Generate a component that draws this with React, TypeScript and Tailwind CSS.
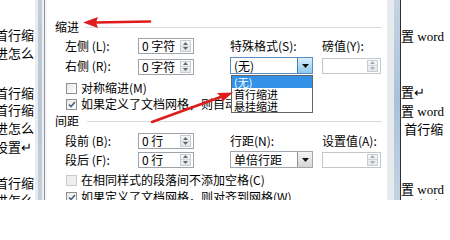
import type { ReactNode } from 'react'

const cjk = "font-['Noto_Sans_CJK_SC','Noto_Sans',sans-serif]"
const doc = "font-['Liberation_Serif','Noto_Sans_CJK_SC',serif]"

function SpinArrows({ disabled = false }: { disabled?: boolean }) {
  const fill = disabled ? '#a8adb3' : '#5c6670'
  return (
    <div className="mr-[2px] flex h-[12px] w-[11px] flex-col border border-[#c9cdd2] bg-gradient-to-b from-[#f6f7f8] to-[#e3e6ea]">
      <div className="flex flex-1 items-center justify-center border-b border-[#cfd3d8]">
        <svg width="5" height="3" viewBox="0 0 5 3">
          <path d="M0 3 L2.5 0 L5 3 Z" fill={fill} />
        </svg>
      </div>
      <div className="flex flex-1 items-center justify-center">
        <svg width="5" height="3" viewBox="0 0 5 3">
          <path d="M0 0 L2.5 3 L5 0 Z" fill={fill} />
        </svg>
      </div>
    </div>
  )
}

function Spin({ value, width = 'w-[56px]', disabled = false }: { value?: string; width?: string; disabled?: boolean }) {
  return (
    <div
      className={`flex h-[16px] ${width} items-center justify-between border ${
        disabled ? 'border-[#c3c6ca]' : 'border-[#9ea4ab]'
      } bg-white`}
    >
      <span className="pl-[3px] text-[12px] leading-[14px]">{value}</span>
      <SpinArrows disabled={disabled} />
    </div>
  )
}

function Combo({ value, hot = false }: { value: string; hot?: boolean }) {
  return (
    <div
      className={`flex h-[17px] w-[83px] items-center justify-between border ${
        hot ? 'border-[#5b8fc4]' : 'border-[#a2a7ad]'
      } bg-white`}
    >
      <span className="pl-[3px] text-[12px] leading-[14px]">{value}</span>
      <div
        className={`flex h-full w-[15px] items-center justify-center border-l ${
          hot
            ? 'border-[#3c7fb1] bg-gradient-to-b from-[#d8effb] to-[#8ec8ee]'
            : 'border-[#8d9298] bg-gradient-to-b from-[#f4f4f4] to-[#d6d6d6]'
        }`}
      >
        <svg width="7" height="4" viewBox="0 0 7 4">
          <path d="M0 0 L3.5 4 L7 0 Z" fill="#111" />
        </svg>
      </div>
    </div>
  )
}

function Check({ checked = false, disabled = false, children }: { checked?: boolean; disabled?: boolean; children: ReactNode }) {
  return (
    <div className="flex h-[12px] items-center pl-[19px]">
      <div
        className={`flex h-[11px] w-[11px] items-center justify-center border ${
          disabled ? 'border-[#c8cacc] bg-[#eeeeee]' : 'border-[#8e8f8f] bg-gradient-to-br from-[#e8e8e8] to-[#ffffff]'
        }`}
      >
        {checked && (
          <svg width="8" height="7" viewBox="0 0 8 7">
            <path d="M1 3.5 L3 5.5 L7 1" stroke="#4a5f7a" strokeWidth="1.6" fill="none" />
          </svg>
        )}
      </div>
      <span className="ml-[4px] whitespace-nowrap text-[12px] leading-[14px]">{children}</span>
    </div>
  )
}

function Heading({ children, lineFrom }: { children: ReactNode; lineFrom: string }) {
  return (
    <div className="flex h-[16px] items-center pl-[8px]">
      <span className="text-[12px] leading-[14px]">{children}</span>
      <div className={`${lineFrom} mr-[3px] h-px flex-1 bg-[#d5dbe1]`} />
    </div>
  )
}

const leftLines: [number, string][] = [
  [27, '首行缩'],
  [45, '进怎么'],
  [85, '首行缩'],
  [102, '首行缩'],
  [120, '进怎么'],
  [139, '设置↵'],
  [175, '首行缩'],
  [192, '进怎么'],
]

const rightLines: [number, string][] = [
  [28, '置 word'],
  [84, '置↵'],
  [103, '置 word'],
  [121, ' 首行缩'],
  [181, '置 word'],
  [197, ' 以怎么'],
]

function DocColumn({ lines, className }: { lines: [number, string][]; className: string }) {
  let y = 0
  return (
    <div className={`flex h-full flex-col overflow-hidden bg-white text-[13px] text-black ${doc} ${className}`}>
      {lines.map(([top, text], i) => {
        const gap = top - y
        y = top + 18
        return (
          <div key={i} style={{ marginTop: gap }} className="h-[18px] shrink-0 whitespace-pre leading-[18px]">
            {text}
          </div>
        )
      })}
    </div>
  )
}

export default function App() {
  return (
    <div className="relative flex h-[200px] w-[450px] overflow-hidden bg-white text-black">
      <DocColumn lines={leftLines} className="w-[35px] shrink-0 [&>div]:ml-[-5px]" />

      {/* left window frame */}
      <div className="flex h-full w-[12px] shrink-0">
        <div className="w-[3px] bg-[#e9ecef]" />
        <div className="w-[4px] bg-gradient-to-b from-[#c3ccd6] via-[#b9c6d4] to-[#c6d0da]" />
        <div className="w-[2px] bg-[#eef1f4]" />
        <div className="w-px bg-[#8d949c]" />
        <div className="w-[2px] bg-[#f5f6f7]" />
      </div>

      {/* dialog body */}
      <div className={`relative flex h-full w-[338px] shrink-0 flex-col bg-white pt-[20px] ${cjk}`}>
        <Heading lineFrom="ml-[6px]">缩进</Heading>

        <div className="mt-[4px] flex h-[16px] items-center pl-[18px]">
          <span className="w-[73px] text-[12px] leading-[14px]">左侧 (L):</span>
          <Spin value="0 字符" />
          <span className="ml-[36px] w-[92px] text-[12px] leading-[14px]">特殊格式(S):</span>
          <span className="text-[12px] leading-[14px]">磅值(Y):</span>
        </div>

        <div className="mt-[3px] flex h-[17px] items-center pl-[18px]">
          <span className="w-[73px] text-[12px] leading-[14px]">右侧 (R):</span>
          <div className="mt-[2px]">
            <Spin value="0 字符" />
          </div>
          <div className="ml-[36px]">
            <Combo value="(无)" hot />
          </div>
          <div className="ml-[9px]">
            <Spin width="w-[59px]" disabled />
          </div>
        </div>

        <div className="mt-[8px]">
          <Check>对称缩进(M)</Check>
        </div>
        <div className="mt-[4px]">
          <Check checked>如果定义了文档网格，则自动调整右缩进(D)</Check>
        </div>

        <div className="mt-[3px]">
          <Heading lineFrom="ml-[8px]">间距</Heading>
        </div>

        <div className="mt-[4px] flex h-[16px] items-center pl-[18px]">
          <span className="w-[73px] text-[12px] leading-[14px]">段前 (B):</span>
          <Spin value="0 行" />
          <span className="ml-[36px] w-[92px] text-[12px] leading-[14px]">行距(N):</span>
          <span className="text-[12px] leading-[14px]">设置值(A):</span>
        </div>

        <div className="mt-[2px] flex h-[17px] items-center pl-[18px]">
          <span className="w-[73px] text-[12px] leading-[14px]">段后 (F):</span>
          <Spin value="0 行" />
          <div className="ml-[36px]">
            <Combo value="单倍行距" />
          </div>
          <div className="ml-[9px]">
            <Spin width="w-[59px]" disabled />
          </div>
        </div>

        <div className="mt-[6px]">
          <Check disabled>在相同样式的段落间不添加空格(C)</Check>
        </div>
        <div className="mt-[5px]">
          <Check checked>如果定义了文档网格，则对齐到网格(W)</Check>
        </div>

        {/* open dropdown list */}
        <div className="absolute left-[184px] top-[75px] flex w-[82px] flex-col border border-[#646464] bg-white">
          <div className="h-[12px] bg-[#3391e6] pl-[2px] text-[11px] leading-[12px] text-white">(无)</div>
          <div className="h-[12px] pl-[2px] text-[11px] leading-[12px]">首行缩进</div>
          <div className="h-[12px] pl-[2px] text-[11px] leading-[12px]">悬挂缩进</div>
        </div>
      </div>

      {/* right window frame */}
      <div className="flex h-full w-[16px] shrink-0">
        <div className="w-[2px] bg-white" />
        <div className="w-[7px] bg-[#e8ebee]" />
        <div className="w-[6px] bg-gradient-to-b from-[#c6d4e2] via-[#a9c2dc] to-[#c4d3e2]" />
        <div className="w-px bg-[#2e2e2e]" />
      </div>

      <DocColumn lines={rightLines} className="flex-1" />

      {/* red annotation arrows */}
      <svg className="pointer-events-none absolute inset-0" width="450" height="200" viewBox="0 0 450 200">
        <path d="M150 21.5 L95 22.5" stroke="#dd1c1c" strokeWidth="2.6" strokeLinecap="round" />
        <path d="M83 22.5 L98 17 L96 22.5 L98 28 Z" fill="#dd1c1c" />
        <path d="M152 122 L222 96.5" stroke="#dd1c1c" strokeWidth="2.4" strokeLinecap="round" />
        <path d="M233 92.5 L217 93 L221 97 L222 102 Z" fill="#dd1c1c" />
      </svg>
    </div>
  )
}
